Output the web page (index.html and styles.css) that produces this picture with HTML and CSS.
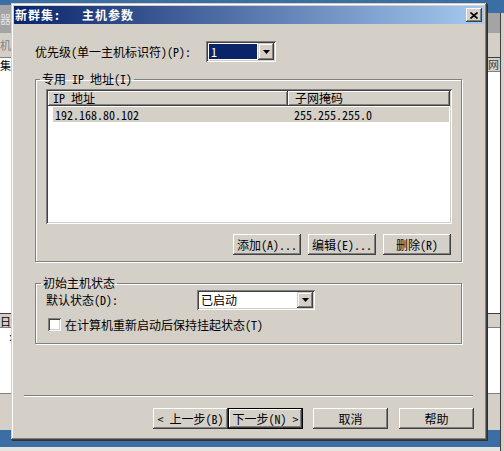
FILE: index.html
```html
<!DOCTYPE html>
<html lang="zh-CN">
<head>
    <meta charset="UTF-8">
    <title>新群集: 主机参数</title>
    <link rel="stylesheet" href="styles.css">
</head>
<body>
    <div class="desk">
        <!-- window behind the dialog, only its edges show -->
        <div class="back-left">
            <div class="s-blue" style="height:5px"></div>
            <div class="s-title" style="height:28px"><span class="peek">器</span></div>
            <div class="s-face" style="height:24px"><span class="peek dim">机</span></div>
            <div class="s-head" style="height:16px"><span class="peek">集</span></div>
            <div class="s-white" style="height:240px"></div>
            <div class="s-col" style="height:15px"><span class="peek">日</span></div>
            <div class="s-white" style="height:65px"><span class="peek colon">:</span></div>
            <div class="s-foot" style="height:37px"></div>
            <div class="s-blue" style="height:17px"></div>
            <div class="s-base" style="height:4px"></div>
        </div>
        <div class="back-mid">
            <div class="s-base" style="height:4px"></div>
        </div>
        <div class="back-right">
            <div class="back-panel">
                <div class="s-blue" style="height:13px"></div>
                <div class="s-title" style="height:20px"></div>
                <div class="s-face" style="height:24px"></div>
                <div class="s-col" style="height:15px"><span class="peek-r">网</span></div>
                <div class="s-white" style="height:241px"></div>
                <div class="s-col" style="height:15px"></div>
                <div class="s-white" style="height:65px"></div>
                <div class="s-foot" style="height:37px"></div>
                <div class="s-blue" style="height:17px"></div>
                <div class="s-base" style="height:4px"></div>
            </div>
            <div class="back-edge"></div>
        </div>

        <div class="dialog">
            <div class="titlebar">
                <span class="title">新群集:&nbsp;&nbsp;&nbsp;主机参数</span>
                <div class="close">
                    <svg width="8" height="7" viewBox="0 0 8 7"><path d="M0.5 0.5 L7.5 6.5 M7.5 0.5 L0.5 6.5" stroke="#000" stroke-width="1.7" fill="none"/></svg>
                </div>
            </div>

            <div class="client">
                <div class="prio-row">
                    <span class="prio-label">优先级(单一主机标识符)(P):</span>
                    <div class="combo prio">
                        <div class="combo-value selected">1</div>
                        <div class="drop">
                            <svg width="7" height="4" viewBox="0 0 7 4"><polygon points="0,0 7,0 3.5,4" fill="#000"/></svg>
                        </div>
                    </div>
                </div>

                <fieldset class="group ip-group">
                    <legend class="first">专用 IP 地址(I)</legend>
                    <div class="listview">
                        <div class="list-head">
                            <div class="col-head c1">IP 地址</div>
                            <div class="col-head c2">子网掩码</div>
                        </div>
                        <div class="list-row">
                            <div class="cell c1">192.168.80.102</div>
                            <div class="cell c2">255.255.255.0</div>
                        </div>
                    </div>
                    <div class="list-buttons">
                        <div class="btn small">添加(A)...</div>
                        <div class="btn small">编辑(E)...</div>
                        <div class="btn small">删除(R)</div>
                    </div>
                </fieldset>

                <fieldset class="group state-group">
                    <legend class="second">初始主机状态</legend>
                    <div class="state-row">
                        <span class="state-label">默认状态(D):</span>
                        <div class="combo state">
                            <div class="combo-value">已启动</div>
                            <div class="drop">
                                <svg width="7" height="4" viewBox="0 0 7 4"><polygon points="0,0 7,0 3.5,4" fill="#000"/></svg>
                            </div>
                        </div>
                    </div>
                    <div class="check-row">
                        <div class="checkbox"></div>
                        <span>在计算机重新启动后保持挂起状态(T)</span>
                    </div>
                </fieldset>

                <div class="footer">
                    <div class="separator"></div>
                    <div class="wizard-buttons">
                        <div class="btn wide">&lt; 上一步(B)</div>
                        <div class="btn wide default">下一步(N) &gt;</div>
                        <div class="btn wide cancel">取消</div>
                        <div class="btn wide help">帮助</div>
                    </div>
                </div>
            </div>
        </div>
    </div>
</body>
</html>
```

FILE: styles.css
```css
body {
    margin: 0;
    font-family: "Noto Sans Mono CJK SC", "Noto Sans CJK SC", sans-serif;
    font-size: 12px;
    line-height: 14px;
    color: #000;
}
.desk {
    position: relative;
    width: 504px;
    height: 451px;
    overflow: hidden;
    display: flex;
    background: #3a6ea5;
}

/* window behind */
.back-left {
    width: 12px;
    display: flex;
    flex-direction: column;
}
.back-mid {
    flex: 1;
    display: flex;
    flex-direction: column;
    justify-content: flex-end;
}
.back-right {
    width: 17px;
    display: flex;
}
.back-panel {
    width: 13px;
    display: flex;
    flex-direction: column;
}
.back-edge {
    flex: 1;
    margin-top: 13px;
    border-left: 1px solid #404040;
    background: #d4d0c8;
}
.s-blue { background: #3a6ea5; }
.s-title { background: #a4a4a4; color: #e4e4e4; }
.s-face { background: #d4d0c8; }
.s-head { background: #fff; border-top: 1px solid #808080; box-sizing: border-box; }
.s-white { background: #fff; }
.s-col {
    background: #d4d0c8;
    border-top: 1px solid #404040;
    border-bottom: 1px solid #808080;
    box-sizing: border-box;
}
.s-foot { background: #d4d0c8; border-top: 1px solid #808080; box-sizing: border-box; }
.s-base { background: #e6e4de; }
.peek {
    display: block;
    font-size: 11px;
    line-height: 13px;
    padding-top: 1px;
    white-space: nowrap;
}
.s-title .peek { padding-top: 8px; }
.s-face .peek { padding-top: 6px; }
.peek.dim { color: #808080; }
.peek.colon { margin-left: 8px; padding-top: 2px; }
.peek-r {
    display: block;
    font-size: 11px;
    line-height: 13px;
    padding-left: 1px;
    color: #404040;
}

/* dialog */
.dialog {
    position: absolute;
    left: 11px;
    top: 3px;
    width: 476px;
    height: 437px;
    box-sizing: border-box;
    padding: 3px;
    background: #d4d0c8;
    box-shadow: inset -1px -1px #404040, inset 1px 1px #d4d0c8, inset -2px -2px #808080, inset 2px 2px #fff, 1px 1px 0 #303030;
    display: flex;
    flex-direction: column;
}
.titlebar {
    height: 18px;
    display: flex;
    align-items: center;
    padding: 0 2px 0 1px;
    background: linear-gradient(to right, #0a246a, #a6caf0);
}
.title {
    flex: 1;
    color: #fff;
    font-weight: bold;
    letter-spacing: 1px;
}
.close {
    width: 16px;
    height: 14px;
    display: flex;
    align-items: center;
    justify-content: center;
    background: #d4d0c8;
    box-shadow: inset -1px -1px #404040, inset 1px 1px #fff, inset -2px -2px #808080;
}

.client {
    flex: 1;
    display: flex;
    flex-direction: column;
}
.prio-row {
    margin: 17px 0 0 21px;
    height: 21px;
    display: flex;
    align-items: center;
}
.prio-label { width: 171px; flex: none; }

.combo {
    box-sizing: border-box;
    display: flex;
    padding: 2px;
    background: #fff;
    box-shadow: inset 1px 1px #808080, inset -1px -1px #fff, inset 2px 2px #404040, inset -2px -2px #d4d0c8;
}
.combo.prio { width: 70px; height: 21px; }
.combo.state { width: 118px; height: 20px; }
.combo-value {
    flex: 1;
    padding-left: 2px;
    line-height: 15px;
}
.combo.prio .combo-value { margin: 1px; }
.combo-value.selected {
    background: #0a246a;
    color: #fff;
}
.drop {
    width: 16px;
    display: flex;
    align-items: center;
    justify-content: center;
    background: #d4d0c8;
    box-shadow: inset -1px -1px #404040, inset 1px 1px #d4d0c8, inset -2px -2px #808080, inset 2px 2px #fff;
}

/* group boxes */
.group {
    margin: 10px 22px 0 21px;
    padding: 3px 9px 6px 10px;
    border: 1px solid #808080;
    box-shadow: inset 1px 1px #fff, 1px 1px #fff;
    min-width: 0;
}
.group legend {
    padding: 0 2px;
    line-height: 14px;
}
.group legend.first { margin-left: -6px; }
.group legend.second { margin-left: -5px; }
.state-group {
    margin-top: 14px;
    padding: 0 9px 12px 10px;
}

.listview {
    height: 135px;
    box-sizing: border-box;
    padding: 2px;
    background: #fff;
    box-shadow: inset 1px 1px #808080, inset -1px -1px #fff, inset 2px 2px #404040, inset -2px -2px #d4d0c8;
}
.list-head {
    height: 15px;
    display: flex;
}
.col-head {
    background: #d4d0c8;
    box-shadow: inset -1px -1px #404040, inset 1px 1px #fff, inset -2px -2px #808080;
    line-height: 14px;
}
.col-head.c1 { width: 240px; padding-left: 5px; box-sizing: border-box; }
.col-head.c2 { flex: 1; padding-left: 7px; }
.list-row {
    margin: 1px 1px 0 5px;
    height: 15px;
    display: flex;
    background: #d4d0c8;
    line-height: 15px;
}
.cell.c1 { width: 235px; padding-left: 2px; box-sizing: border-box; }
.cell.c2 { flex: 1; padding-left: 6px; }

.list-buttons {
    margin-top: 10px;
    padding-right: 1px;
    display: flex;
    justify-content: flex-end;
    gap: 7px;
}

.btn {
    box-sizing: border-box;
    height: 21px;
    display: flex;
    align-items: center;
    justify-content: center;
    background: #d4d0c8;
    box-shadow: inset -1px -1px #404040, inset 1px 1px #fff, inset -2px -2px #808080, inset 2px 2px #d4d0c8;
    white-space: nowrap;
}
.btn.small { width: 68px; }
.btn.wide { width: 75px; }
.btn.default {
    border: 1px solid #000;
}
.btn.cancel { margin-left: 10px; }
.btn.help { margin-left: 11px; }

.state-row {
    height: 20px;
    display: flex;
    align-items: center;
}
.state-label { width: 151px; flex: none; }
.check-row {
    margin-top: 8px;
    height: 13px;
    display: flex;
    align-items: center;
    gap: 4px;
    padding-left: 2px;
}
.checkbox {
    width: 13px;
    height: 13px;
    box-sizing: border-box;
    background: #fff;
    box-shadow: inset 1px 1px #808080, inset -1px -1px #fff, inset 2px 2px #404040, inset -2px -2px #d4d0c8;
}

.footer {
    margin-top: auto;
    padding-bottom: 8px;
}
.separator {
    margin: 0 11px 0 10px;
    border-top: 1px solid #808080;
    border-bottom: 1px solid #fff;
}
.wizard-buttons {
    margin: 11px 10px 0 0;
    display: flex;
    justify-content: flex-end;
}
```
